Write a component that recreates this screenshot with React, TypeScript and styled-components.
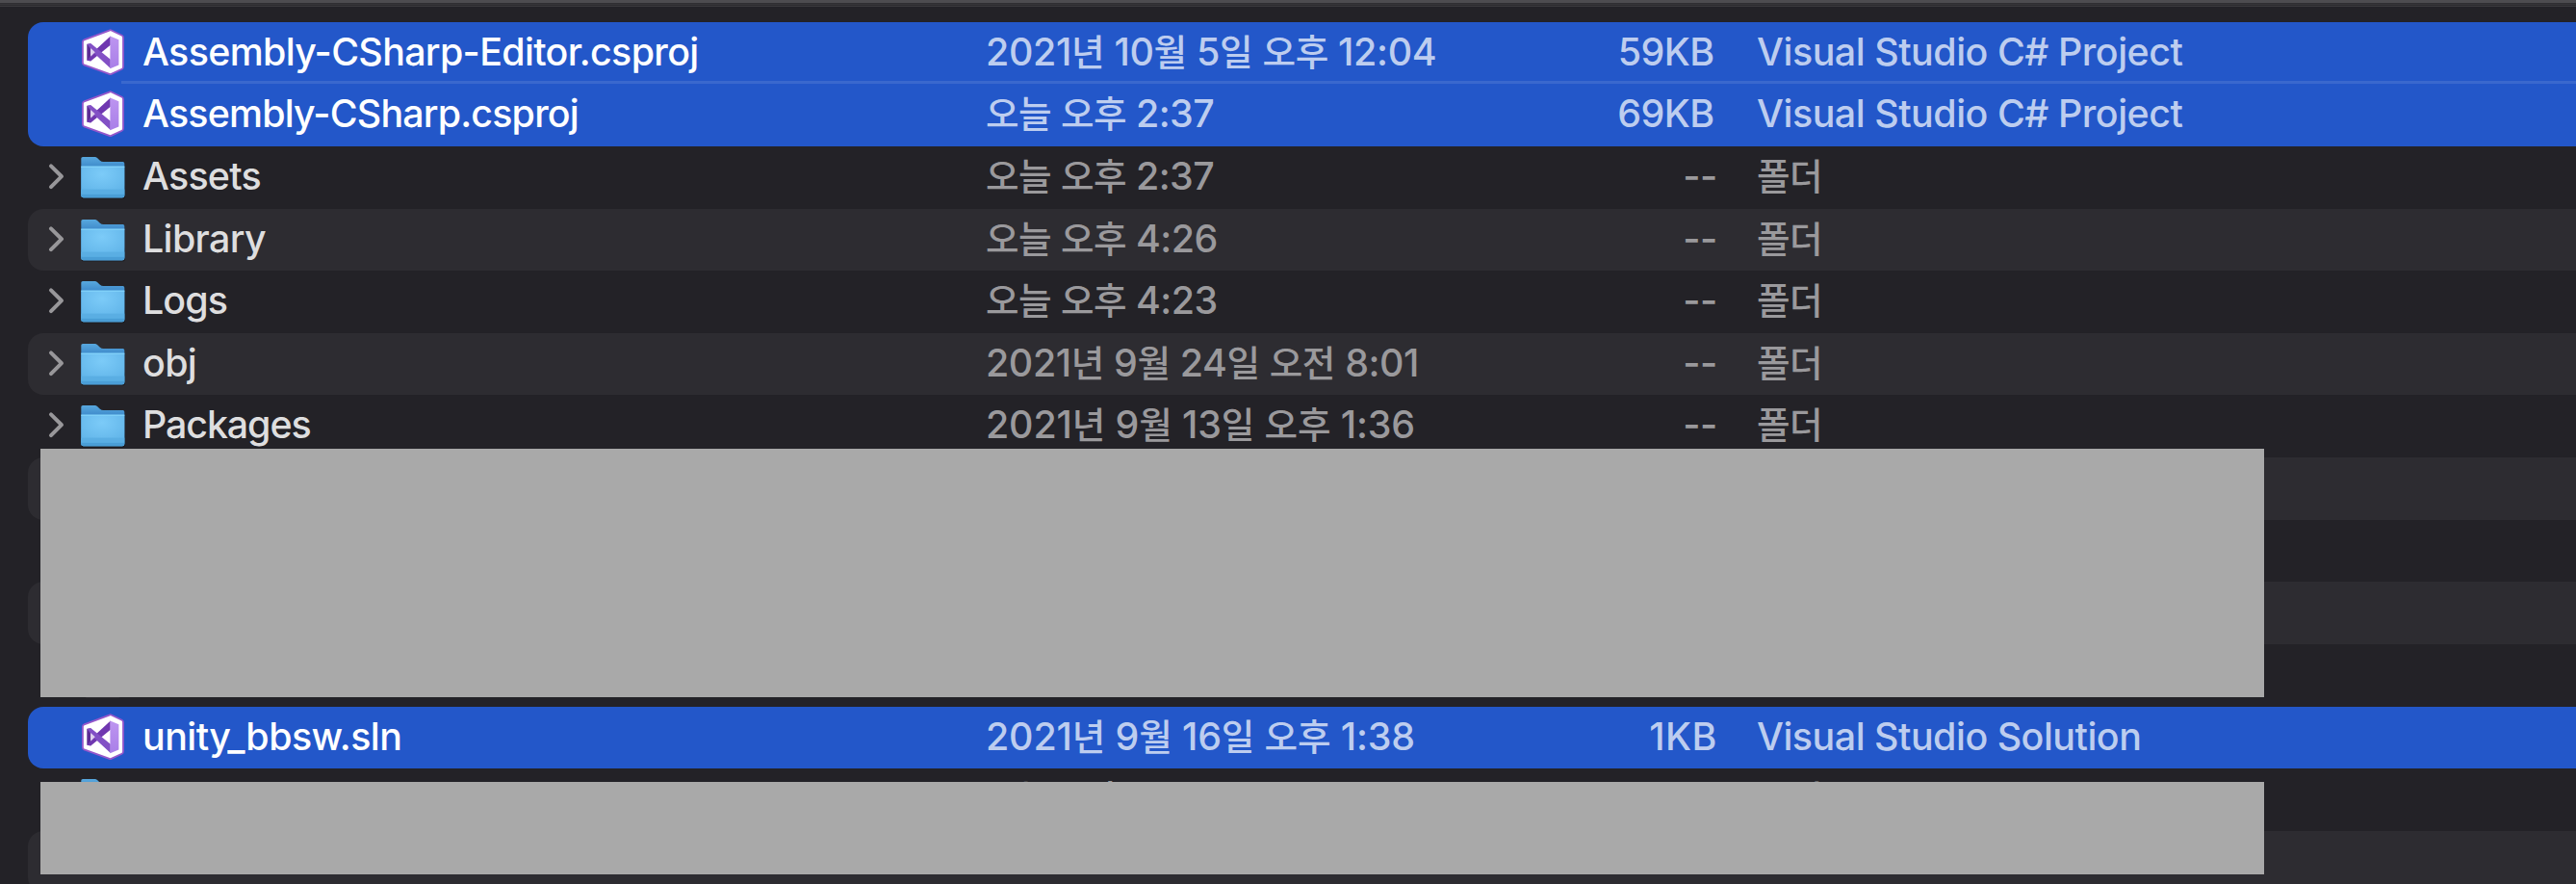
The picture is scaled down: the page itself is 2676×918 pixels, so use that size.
import styled, { createGlobalStyle } from "styled-components";

const GlobalStyle = createGlobalStyle`
  * {
    box-sizing: border-box;
  }

  body {
    margin: 0;
    background-color: #232227;
    overflow: hidden;
  }
`;

const Window = styled.div`
  position: relative;

  width: 100%;
  height: 918px;

  overflow: hidden;

  background-color: #232227;

  font-family: Inter, "Noto Sans CJK KR", sans-serif;
  font-size: 39.4px;
  font-weight: 450;
`;

const HeaderEdge = styled.div`
  height: 6.8px;

  border-top: 3px solid #4d4c50;

  background: linear-gradient(#2f2e32 0 1px, #353438 1px 2px, #2c2b30 2px 3px, #3a393d 3px);
`;

const List = styled.div`
  display: flex;
  flex-direction: column;

  padding: 16px 0 0 29px;
`;

type Shape = "single" | "first" | "last";

const radius = {
  single: "16px 0 0 16px",
  first: "16px 0 0 0",
  last: "0 0 0 16px"
};

const Row = styled.div<{background: string; shape: Shape}>`
  display: grid;
  grid-template-columns: 21px 34px 64px 876px 760px 41px 1fr;

  position: relative;

  height: 64.62px;
  flex-shrink: 0;

  background-color: ${props => props.background};
  border-radius: ${props => radius[props.shape]};
`;

const Separator = styled.div`
  position: absolute;

  right: 0;
  bottom: 0.4px;
  left: 97px;

  z-index: 1;

  height: 3px;

  background-color: #3a68ce;
`;

const IconSlot = styled.div`
  display: flex;
  align-items: flex-start;
`;

const Cell = styled.div<{color: string; tracking?: number}>`
  color: ${props => props.color};
  letter-spacing: ${props => props.tracking ?? -0.65}px;
  line-height: 63.4px;
  white-space: pre;
`;

const Details = styled.div`
  display: flex;
  justify-content: space-between;
`;

const SizeCell = styled(Cell)<{inset?: number}>`
  padding-right: ${props => props.inset ?? 0}px;
`;

const Hangul = styled.span`
  font-family: "Noto Sans CJK KR", sans-serif;
  font-size: 37.6px;
  line-height: 0;
`;

const Cover = styled.div<{top: number; height: number}>`
  position: absolute;

  top: ${props => props.top}px;
  left: 42px;

  z-index: 2;

  width: 2310px;
  height: ${props => props.height}px;

  background-color: #a9a9a9;
`;

const Chevron = () => (
  <svg width="20" height="64" viewBox="0 0 20 64">
    <path d="M3 20.4L14 31.2L3 42.2" fill="none" stroke="#98979a" strokeWidth="4" strokeLinecap="round" strokeLinejoin="round" />
  </svg>
);

const FolderIcon = () => (
  <svg width="47" height="60" viewBox="0 0 47 60">
    <defs>
      <linearGradient id="folderBack" x1="0" y1="0" x2="0" y2="1">
        <stop offset="0" stopColor="#58a8de" />
        <stop offset="0.24" stopColor="#3f8bcb" />
      </linearGradient>
      <radialGradient id="folderFront" cx="0.48" cy="0.25" r="0.75">
        <stop offset="0" stopColor="#7ccbf8" />
        <stop offset="1" stopColor="#5fb3e8" />
      </radialGradient>
    </defs>
    <rect x="0.5" y="40" width="45.4" height="14.6" rx="2" fill="#151518" opacity="0.55" />
    <path d="M0.3 12.6Q0.3 11 2 11H14.4Q16 11 17.3 12.2L19.6 14.4Q21.4 16 23.4 16H43.6Q45.3 16 45.3 17.8V50Q45.3 53.3 43 53.3H3Q0.3 53.3 0.3 50.5Z" fill="url(#folderBack)" />
    <path d="M0.3 20.8H45.3V51Q45.3 53.3 43.2 53.3H2.6Q0.3 53.3 0.3 51Z" fill="url(#folderFront)" />
    <rect x="0.3" y="20.6" width="45" height="1.2" fill="#84d4fa" />
    <rect x="0.3" y="44.6" width="45" height="5.2" fill="#5aaee3" />
    <path d="M0.3 49.8H45.3V51Q45.3 53.3 43.2 53.3H2.6Q0.3 53.3 0.3 51Z" fill="#4a9ed6" />
  </svg>
);

const VisualStudioIcon = () => (
  <svg width="47" height="60" viewBox="0 0 47 60">
    <defs>
      <linearGradient id="vsPanel" x1="0" y1="0" x2="0" y2="1">
        <stop offset="0" stopColor="#bd95f0" />
        <stop offset="1" stopColor="#a97fe8" />
      </linearGradient>
    </defs>
    <path d="M29.6 8.6Q30.6 8 31.6 8.5L42.6 13.8Q44 14.5 44 16V46.4Q44 48 42.6 48.7L31.6 53.9Q30.6 54.4 29.6 53.9L3.4 44.4Q1.9 43.8 1.9 42.2V20.6Q1.9 19 3.4 18.4Z" fill="#fff" stroke="#9557cb" strokeWidth="1.8" />
    <path d="M6.3 23L10.2 22.4V40.2L6.3 39.6Z" fill="#5c2b94" />
    <path d="M6.3 39.8L10.2 40.6L30.8 23.8V14.6L14 30Z" fill="#6f37b0" />
    <path d="M6.3 22.8L10.2 22L30.8 38.8V48L14 32.6Z" fill="#8250c5" />
    <path d="M10.2 27L14.8 31.3L10.2 35.8Z" fill="#ddd0ee" />
    <path d="M30.4 14.6L39.4 18.2V44.6L30.4 48.2Z" fill="url(#vsPanel)" />
  </svg>
);

const DocumentIcon = () => (
  <svg width="47" height="60" viewBox="0 0 47 60">
    <rect x="4" y="9" width="37.5" height="46.6" rx="2" fill="#3c3b3f" />
  </svg>
);

const icons = {
  folder: FolderIcon,
  vs: VisualStudioIcon,
  document: DocumentIcon
};

interface FileItem {
  icon?: keyof typeof icons;
  name?: string;
  date?: string;
  size?: string;
  kind?: string;
  nameTracking?: number;
  dateTracking?: number;
  sizeTracking?: number;
  kindTracking?: number;
  sizeInset?: number;
  selected?: boolean;
  shape?: Shape;
}

const files: FileItem[] = [
  { icon: "vs", name: "Assembly-CSharp-Editor.csproj", date: "2021년 10월 5일 오후 12:04", size: "59KB", kind: "Visual Studio C# Project", nameTracking: -0.67, dateTracking: -0.33, sizeTracking: -0.6, sizeInset: 3.5, selected: true, shape: "first" },
  { icon: "vs", name: "Assembly-CSharp.csproj", date: "오늘 오후 2:37", size: "69KB", kind: "Visual Studio C# Project", nameTracking: -0.83, sizeTracking: -0.6, sizeInset: 3.5, selected: true, shape: "last" },
  { icon: "folder", name: "Assets", date: "오늘 오후 2:37", size: "--", kind: "폴더", nameTracking: -0.8 },
  { icon: "folder", name: "Library", date: "오늘 오후 4:26", size: "--", kind: "폴더" },
  { icon: "folder", name: "Logs", date: "오늘 오후 4:23", size: "--", kind: "폴더", nameTracking: -0.9 },
  { icon: "folder", name: "obj", date: "2021년 9월 24일 오전 8:01", size: "--", kind: "폴더", dateTracking: -0.4 },
  { icon: "folder", name: "Packages", date: "2021년 9월 13일 오후 1:36", size: "--", kind: "폴더", nameTracking: -1.1, dateTracking: -0.15 },
  {},
  {},
  {},
  { icon: "document" },
  { icon: "vs", name: "unity_bbsw.sln", date: "2021년 9월 16일 오후 1:38", size: "1KB", kind: "Visual Studio Solution", nameTracking: -0.55, dateTracking: -0.15, sizeTracking: 0.5, kindTracking: -0.5, selected: true },
  { icon: "folder", date: "오늘 오후", kind: "폴더" },
  {}
];

// Hangul runs are set slightly smaller than the latin text around them
const renderText = (text = "") =>
  text.split(/([가-힣]+)/).map((part, i) => (i % 2 ? <Hangul key={i}>{part}</Hangul> : part));

const getBackground = (item: FileItem, index: number) => {
  if (item.selected) return "#2357c9";
  return index % 2 ? "#2d2c31" : "transparent";
};

const App = (): JSX.Element => (
  <Window>
    <GlobalStyle />
    <HeaderEdge />
    <List>
      {files.map((item, index) => {
        const Icon = item.icon && icons[item.icon];
        const detailColor = item.selected ? "#bdcdef" : "#9a999c";

        return (
          <Row key={index} background={getBackground(item, index)} shape={item.shape ?? "single"}>
            <div />
            <IconSlot>{item.icon === "folder" && <Chevron />}</IconSlot>
            <IconSlot>{Icon && <Icon />}</IconSlot>
            <Cell color={item.selected ? "#ffffff" : "#dededf"} tracking={item.nameTracking}>
              {item.name}
            </Cell>
            <Details>
              <Cell color={detailColor} tracking={item.dateTracking ?? -0.55}>{renderText(item.date)}</Cell>
              <SizeCell color={detailColor} tracking={item.sizeTracking ?? -0.3} inset={item.sizeInset}>{item.size}</SizeCell>
            </Details>
            <div />
            <Cell color={detailColor} tracking={item.kindTracking ?? -0.48}>{renderText(item.kind)}</Cell>
            {item.shape === "first" && <Separator />}
          </Row>
        );
      })}
    </List>
    <Cover top={466} height={258} />
    <Cover top={812} height={96} />
  </Window>
);

export default App;
